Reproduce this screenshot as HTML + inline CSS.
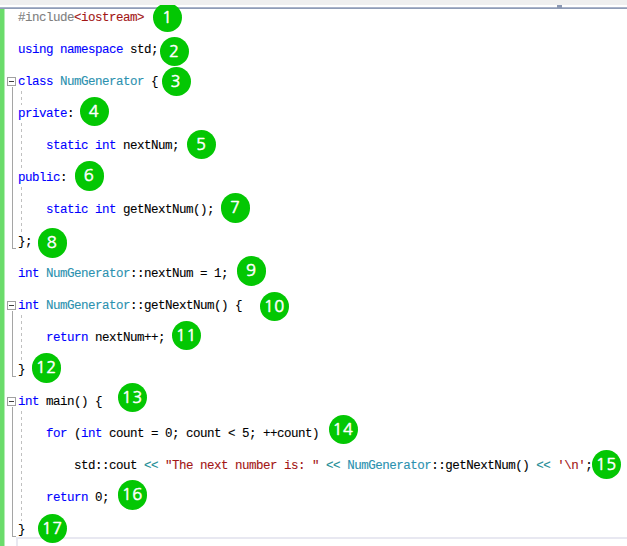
<!DOCTYPE html>
<html><head><meta charset="utf-8"><title>code</title>
<style>
html,body{margin:0;padding:0;background:#fff;}
body{width:627px;height:546px;position:relative;overflow:hidden;font-family:"Liberation Mono","DejaVu Sans Mono",monospace;}
.top{position:absolute;left:0;top:0;width:627px;height:5px;background:#efefef;z-index:5;}
.topline{position:absolute;left:0;top:7px;width:627px;height:2px;background:linear-gradient(to bottom,#a9b3c9 0,#a9b3c9 1px,#8f9cb6 1px,#8f9cb6 2px);}
.bump{position:absolute;left:557px;top:5px;width:5px;height:3px;background:#8b98b3;}
.bar{position:absolute;left:0;top:9px;width:4px;height:537px;background:#6bdc6b;border-right:1px solid #b4edb4;}
.ln{position:absolute;left:18px;height:16px;line-height:16px;font-size:12.5px;letter-spacing:-0.5px;white-space:pre;color:#000;-webkit-text-stroke:0.1px currentColor;}
.k{color:#0000ff}.t{color:#2b91af}.s{color:#a31515}.g{color:#808080}.o{color:#1a8c94}
.c{position:absolute;width:29.5px;height:29.5px;border-radius:50%;background:#03c703;color:#fff;font-family:"NanumGothic","Liberation Sans",sans-serif;font-size:16.5px;letter-spacing:0.5px;text-indent:-0.9px;-webkit-text-stroke:0.5px #fff;line-height:29.5px;text-align:center;z-index:3;}
.fb{position:absolute;left:7px;width:7px;height:7px;border:1px solid #a0a0a0;background:#fff;}
.fb i{position:absolute;left:1px;top:3px;width:5px;height:1px;background:#404040;}
.fl{position:absolute;left:12px;width:1px;background:#a5a5a5;}
.ft{position:absolute;left:12px;width:4px;height:1px;background:#a5a5a5;}
.dg{position:absolute;left:21px;width:1px;background:repeating-linear-gradient(to bottom,transparent 0,transparent 2px,#c0c0c0 2px,#c0c0c0 5px,transparent 5px,transparent 6px);}
.bot{position:absolute;left:16px;top:537px;width:620px;height:20px;border:2px solid #e8e8f1;background:#fff;}
</style></head><body>
<div class="top"></div><div class="topline"></div><div class="bump"></div><div class="bar"></div>

<div class="ln" style="top:10px"><span class="g">#include</span><span class="s">&lt;iostream&gt;</span></div>
<div class="ln" style="top:42px"><span class="k">using</span> <span class="k">namespace</span> std;</div>
<div class="ln" style="top:74px"><span class="k">class</span> <span class="t">NumGenerator</span> {</div>
<div class="ln" style="top:106px"><span class="k">private</span>:</div>
<div class="ln" style="top:138px">    <span class="k">static</span> <span class="k">int</span> nextNum;</div>
<div class="ln" style="top:170px"><span class="k">public</span>:</div>
<div class="ln" style="top:202px">    <span class="k">static</span> <span class="k">int</span> getNextNum();</div>
<div class="ln" style="top:234px">};</div>
<div class="ln" style="top:266px"><span class="k">int</span> <span class="t">NumGenerator</span>::nextNum = 1;</div>
<div class="ln" style="top:298px"><span class="k">int</span> <span class="t">NumGenerator</span>::getNextNum() {</div>
<div class="ln" style="top:330px">    <span class="k">return</span> nextNum++;</div>
<div class="ln" style="top:362px">}</div>
<div class="ln" style="top:394px"><span class="k">int</span> main() {</div>
<div class="ln" style="top:426px">    <span class="k">for</span> (<span class="k">int</span> count = 0; count &lt; 5; ++count)</div>
<div class="ln" style="top:458px">        std::cout <span class="o">&lt;&lt;</span> <span class="s">"The next number is: "</span> <span class="o">&lt;&lt;</span> <span class="t">NumGenerator</span>::getNextNum() <span class="o">&lt;&lt;</span> <span class="s">'\n'</span>;</div>
<div class="ln" style="top:490px">    <span class="k">return</span> 0;</div>
<div class="ln" style="top:522px">}</div>
<div class="fb" style="top:77px"><i></i></div>
<div class="fl" style="top:87px;height:161px"></div>
<div class="ft" style="top:248px"></div>
<div class="fb" style="top:301px"><i></i></div>
<div class="fl" style="top:311px;height:65px"></div>
<div class="ft" style="top:376px"></div>
<div class="fb" style="top:397px"><i></i></div>
<div class="fl" style="top:407px;height:129px"></div>
<div class="ft" style="top:536px"></div>
<div class="dg" style="top:89px;height:16px"></div>
<div class="dg" style="top:121px;height:48px"></div>
<div class="dg" style="top:185px;height:48px"></div>
<div class="dg" style="top:313px;height:48px"></div>
<div class="dg" style="top:409px;height:112px"></div>
<div class="bot"></div>
<div class="c" style="left:152.85px;top:2.90px">1</div>
<div class="c" style="left:159.85px;top:36.55px">2</div>
<div class="c" style="left:161.55px;top:66.75px">3</div>
<div class="c" style="left:79.75px;top:96.75px">4</div>
<div class="c" style="left:186.85px;top:129.65px">5</div>
<div class="c" style="left:74.75px;top:161.05px">6</div>
<div class="c" style="left:220.85px;top:193.15px">7</div>
<div class="c" style="left:37.75px;top:228.35px">8</div>
<div class="c" style="left:236.85px;top:256.05px">9</div>
<div class="c" style="left:259.95px;top:291.95px">10</div>
<div class="c" style="left:171.85px;top:320.55px">11</div>
<div class="c" style="left:31.95px;top:353.15px">12</div>
<div class="c" style="left:117.85px;top:382.85px">13</div>
<div class="c" style="left:328.75px;top:414.95px">14</div>
<div class="c" style="left:591.95px;top:449.55px">15</div>
<div class="c" style="left:117.85px;top:480.45px">16</div>
<div class="c" style="left:37.95px;top:513.55px">17</div>
</body></html>
